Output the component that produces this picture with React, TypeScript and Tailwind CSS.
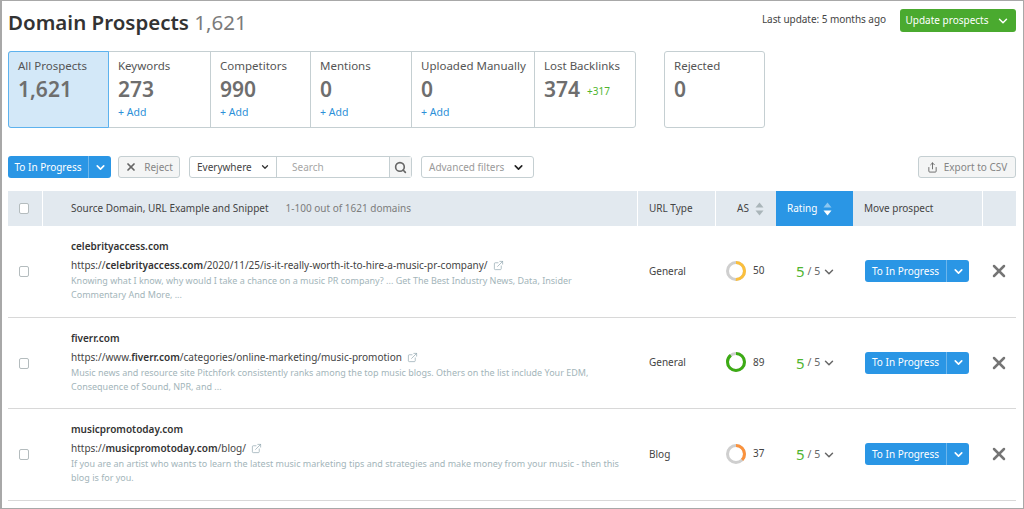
import React from 'react';
import { ChevronDown, ExternalLink, Search, Share, X } from 'lucide-react';

const tabs = [
  { label: 'All Prospects', value: '1,621', width: 'w-[101px]', active: true },
  { label: 'Keywords', value: '273', add: true, width: 'w-[101px]' },
  { label: 'Competitors', value: '990', add: true, width: 'w-[100px]' },
  { label: 'Mentions', value: '0', add: true, width: 'w-[101px]' },
  { label: 'Uploaded Manually', value: '0', add: true, width: 'w-[123px]' },
  { label: 'Lost Backlinks', value: '374', extra: '+317', width: 'w-[101px]' },
];

const rows = [
  {
    domain: 'celebrityaccess.com',
    prefix: 'https://',
    bold: 'celebrityaccess.com',
    path: '/2020/11/25/is-it-really-worth-it-to-hire-a-music-pr-company/',
    lines: [
      'Knowing what I know, why would I take a chance on a music PR company? ... Get The Best Industry News, Data, Insider',
      'Commentary And More, ...',
    ],
    type: 'General',
    score: 50,
    color: '#fbbf3c',
    height: 'h-[92px]',
  },
  {
    domain: 'fiverr.com',
    prefix: 'https://www.',
    bold: 'fiverr.com',
    path: '/categories/online-marketing/music-promotion',
    lines: [
      'Music news and resource site Pitchfork consistently ranks among the top music blogs. Others on the list include Your EDM,',
      'Consequence of Sound, NPR, and ...',
    ],
    type: 'General',
    score: 89,
    color: '#3cab14',
    height: 'h-[91px]',
  },
  {
    domain: 'musicpromotoday.com',
    prefix: 'https://',
    bold: 'musicpromotoday.com',
    path: '/blog/',
    lines: [
      'If you are an artist who wants to learn the latest music marketing tips and strategies and make money from your music - then this',
      'blog is for you.',
    ],
    type: 'Blog',
    score: 37,
    color: '#fb923c',
    height: 'h-[92px]',
  },
];

const gridCols = 'grid grid-cols-[34px_595px_78px_61px_77px_129px_34px]';

const Checkbox = () => (
  <span className="block w-[10px] h-[11px] rounded-[2px] border border-[#b4bcbe] bg-white" />
);

const SplitButton = ({ width }: { width: string }) => (
  <div className={`flex h-[22px] ${width} rounded-[3px] bg-[#2a96e5] text-white text-[10px]`}>
    <span className="flex-1 flex items-center justify-center border-r border-[#6db6ec]">To In Progress</span>
    <span className="w-[22px] flex items-center justify-center">
      <ChevronDown className="w-[13px] h-[13px]" strokeWidth={3} />
    </span>
  </div>
);

const Ring = ({ score, color }: { score: number; color: string }) => {
  const circumference = 2 * Math.PI * 8.5;
  const filled = (score / 100) * circumference;
  return (
    <svg width="20" height="20" viewBox="0 0 20 20" className="shrink-0">
      <circle cx="10" cy="10" r="8.5" fill="none" stroke="#cfcfcf" strokeWidth="3" />
      <circle
        cx="10"
        cy="10"
        r="8.5"
        fill="none"
        stroke={color}
        strokeWidth="3"
        strokeDasharray={`${filled} ${circumference}`}
        transform="rotate(-90 10 10)"
      />
    </svg>
  );
};

const SortArrows = ({ up, down }: { up: string; down: string }) => (
  <svg width="9" height="14" viewBox="0 0 9 14" className="shrink-0">
    <path d="M4.5 0.5 L8.5 5.5 L0.5 5.5 Z" fill={up} />
    <path d="M0.5 8.5 L8.5 8.5 L4.5 13.5 Z" fill={down} />
  </svg>
);

export default function App() {
  return (
    <div className="w-[1024px] h-[509px] overflow-hidden bg-white border-t border-b border-r border-l-2 border-[#a8a8a8] pl-[6px] pr-[7px] font-['Noto_Sans',sans-serif] text-[#444]">
      <header className="h-[32px] flex items-start justify-between">
        <h1 className="mt-[10px] text-[20.5px] leading-[22px] font-semibold text-[#333] whitespace-nowrap">
          Domain Prospects <span className="font-normal text-[#7b7b7b]">1,621</span>
        </h1>
        <div className="mt-[8px] flex items-center gap-[14px]">
          <span className="pb-[3px] text-[10px] tracking-[-0.05px] text-[#444]">Last update: 5 months ago</span>
          <button className="w-[116px] h-[23px] rounded-[3px] bg-[#4aaa2f] text-white text-[10px] flex items-center justify-center gap-[8px]">
            Update prospects
            <ChevronDown className="w-[14px] h-[14px]" strokeWidth={2.5} />
          </button>
        </div>
      </header>

      <section className="mt-[18px] flex h-[77px]">
        <div className="flex rounded-[3px] border border-[#c5cfd2]">
          {tabs.map((tab, i) => (
            <div
              key={tab.label}
              className={`${tab.width} pl-[9px] pt-[5px] ${
                tab.active
                  ? '-my-px -ml-px rounded-l-[3px] border border-[#5db2ee] bg-[#d3e8f8]'
                  : i > 1
                    ? 'border-l border-[#c5cfd2]'
                    : ''
              }`}
            >
              <div className="text-[11.5px] leading-[18px] text-[#555] whitespace-nowrap">{tab.label}</div>
              <div className="h-[29px] flex items-center gap-[7px] text-[#6e6e6e]">
                <span className="text-[21px] font-semibold leading-none">{tab.value}</span>
                {tab.extra && <span className="text-[10px] pt-[4px] text-[#4fb52f]">{tab.extra}</span>}
              </div>
              {tab.add && <div className="text-[10.5px] leading-[16px] text-[#2b8fd8]">+ Add</div>}
            </div>
          ))}
        </div>
        <div className="ml-[28px] w-[101px] pl-[9px] pt-[5px] rounded-[3px] border border-[#c5cfd2]">
          <div className="text-[11.5px] leading-[18px] text-[#555]">Rejected</div>
          <div className="h-[29px] flex items-center text-[21px] font-semibold text-[#6e6e6e]">0</div>
        </div>
      </section>

      <section className="mt-[28px] flex items-center h-[22px] text-[10px]">
        <SplitButton width="w-[103px]" />
        <button className="ml-[7px] w-[62px] h-[22px] rounded-[3px] border border-[#c5cfd2] bg-[#f4f5f5] text-[#858585] flex items-center justify-center gap-[7px]">
          <X className="w-[12px] h-[12px] text-[#666]" strokeWidth={3.5} />
          Reject
        </button>
        <div className="ml-[9px] w-[223px] h-[22px] flex rounded-[3px] border border-[#c5cfd2]">
          <div className="w-[87px] flex items-center justify-between pl-[7px] pr-[6px] border-r border-[#c5cfd2] text-[#444]">
            Everywhere
            <ChevronDown className="w-[10px] h-[10px] text-[#333]" strokeWidth={3} />
          </div>
          <div className="flex-1 flex items-center pl-[15px] text-[#a6a6a6]">Search</div>
          <div className="w-[22px] flex items-center justify-center border-l border-[#c5cfd2] bg-[#f4f5f5]">
            <Search className="w-[13px] h-[13px] text-[#666]" strokeWidth={3} />
          </div>
        </div>
        <div className="ml-[9px] w-[113px] h-[22px] rounded-[3px] border border-[#c5cfd2] flex items-center justify-between pl-[7px] pr-[8px] text-[#9a9a9a]">
          Advanced filters
          <ChevronDown className="w-[13px] h-[13px] text-[#222]" strokeWidth={3} />
        </div>
        <button className="ml-auto w-[98px] h-[22px] rounded-[3px] border border-[#c5cfd2] bg-[#f4f5f5] text-[#858585] flex items-center justify-center gap-[6px]">
          <Share className="w-[11px] h-[11px] text-[#666]" strokeWidth={2} />
          Export to CSV
        </button>
      </section>

      <section className="mt-[13px]">
        <div className={`${gridCols} h-[35px] bg-[#e2e9ef] text-[10px] text-[#444]`}>
          <div className="flex items-center pl-[11px]">
            <Checkbox />
          </div>
          <div className="flex items-center pl-[28px] border-l border-white">
            Source Domain, URL Example and Snippet
            <span className="ml-[17px] text-[#7c7c7c]">1-100 out of 1621 domains</span>
          </div>
          <div className="flex items-center pl-[11px] border-l border-white">URL Type</div>
          <div className="flex items-center gap-[6px] pl-[21px] border-l border-white">
            AS
            <SortArrows up="#a9b5b9" down="#a9b5b9" />
          </div>
          <div className="flex items-center gap-[6px] pl-[11px] bg-[#2a96e5] text-white">
            Rating
            <SortArrows up="#8cc7f1" down="#ffffff" />
          </div>
          <div className="flex items-center pl-[11px] pb-[1px]">Move prospect</div>
          <div className="border-l border-white" />
        </div>

        {rows.map((row) => (
          <div key={row.domain} className={`${gridCols} ${row.height} border-b border-[#d8d8d8]`}>
            <div className="flex items-center pl-[11px]">
              <Checkbox />
            </div>
            <div className="pl-[29px] pt-[12px]">
              <div className="text-[10px] leading-[16px] font-semibold text-[#333]">{row.domain}</div>
              <div className="mt-[2px] flex items-center gap-[5px] text-[10px] leading-[18px] text-[#444] whitespace-nowrap">
                <span>
                  {row.prefix}
                  <b className="font-semibold text-[#333]">{row.bold}</b>
                  {row.path}
                </span>
                <ExternalLink className="w-[11px] h-[11px] text-[#8fa5ad]" strokeWidth={1.5} />
              </div>
              {row.lines.map((line) => (
                <div key={line} className="text-[9px] leading-[14px] text-[#a3b5ba] whitespace-nowrap">
                  {line}
                </div>
              ))}
            </div>
            <div className="flex items-center pl-[12px] pb-[1px] text-[10px] text-[#444]">{row.type}</div>
            <div className="flex items-center gap-[7px] pl-[11px] pb-[2px] text-[10px] text-[#444]">
              <Ring score={row.score} color={row.color} />
              {row.score}
            </div>
            <div className="flex items-center pl-[20px] text-[10.5px] text-[#666]">
              <span className="text-[15px] text-[#4fb52f] mr-[3px]">5</span>/ 5
              <ChevronDown className="ml-[2px] w-[14px] h-[14px]" strokeWidth={2.5} />
            </div>
            <div className="flex items-center pl-[12px] pb-[1px]">
              <SplitButton width="w-[104px]" />
            </div>
            <div className="flex items-center justify-center pb-[1px]">
              <X className="w-[20px] h-[20px] text-[#757575]" strokeWidth={3} />
            </div>
          </div>
        ))}
      </section>
    </div>
  );
}
